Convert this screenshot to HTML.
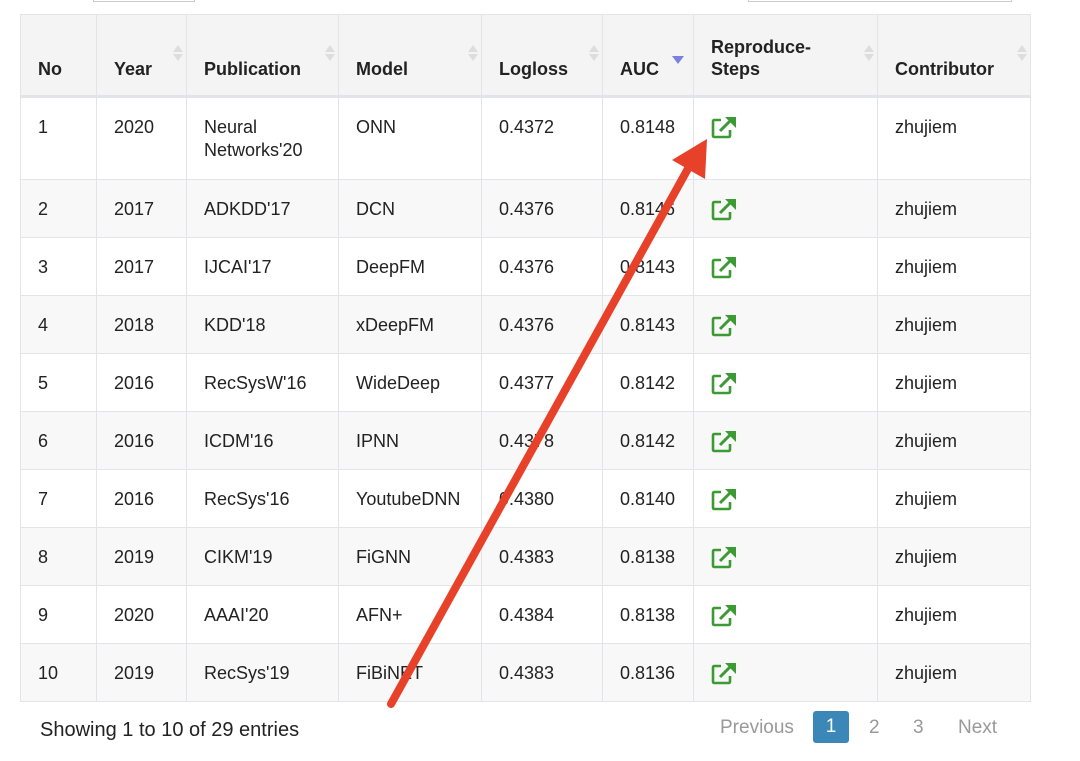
<!DOCTYPE html>
<html><head><style>
body{margin:0;width:1080px;height:761px;background:#fff;font-family:"Liberation Sans",Arial,sans-serif;color:#222;position:relative;overflow:hidden}
table{position:absolute;left:20px;top:14px;border-collapse:collapse;font-size:18px}
td,th{border:1px solid #e2e4e8;text-align:left;vertical-align:top;padding:0 0 0 17px;position:relative}
th{background:#f4f4f5;vertical-align:bottom;padding-bottom:15px;height:65px;font-weight:bold;line-height:22px;border-bottom:3px solid #e2e4e8}
td{height:58px;padding-top:18px;box-sizing:border-box;line-height:23px}
tr.r1 td{height:83px}
tbody tr:nth-child(even) td{background:#f8f8f8}
.s{position:absolute;right:8px;top:30px;width:0;height:0}
.s:before{content:"";position:absolute;left:-5px;top:0;border:5px solid transparent;border-bottom:7px solid #ddd;border-top:0}
.s:after{content:"";position:absolute;left:-5px;top:9px;border:5px solid transparent;border-top:7px solid #ddd;border-bottom:0}
.d{position:absolute;right:9px;top:41px;border:6px solid transparent;border-top:8px solid #7b7fe0;border-bottom:0}
svg.i{display:block;margin-top:-1px}
</style></head><body>
<div style="position:absolute;left:93px;top:-2px;width:100px;height:3px;border:1px solid #ccc;border-top:0"></div>
<div style="position:absolute;left:748px;top:-2px;width:262px;height:3px;border:1px solid #ccc;border-top:0"></div>
<table>
<colgroup><col style="width:76px"><col style="width:90px"><col style="width:152px"><col style="width:143px"><col style="width:121px"><col style="width:91px"><col style="width:184px"><col style="width:153px"></colgroup>
<thead><tr><th>No</th><th>Year<span class="s"></span></th><th>Publication<span class="s"></span></th><th>Model<span class="s"></span></th><th>Logloss<span class="s"></span></th><th>AUC<span class="d"></span></th><th>Reproduce-<br>Steps<span class="s"></span></th><th>Contributor<span class="s"></span></th></tr></thead>
<tbody>
<tr class="r1"><td>1</td><td>2020</td><td>Neural<br>Networks'20</td><td>ONN</td><td>0.4372</td><td>0.8148</td><td>ICON</td><td>zhujiem</td></tr>
<tr><td>2</td><td>2017</td><td>ADKDD'17</td><td>DCN</td><td>0.4376</td><td>0.8146</td><td>ICON</td><td>zhujiem</td></tr>
<tr><td>3</td><td>2017</td><td>IJCAI'17</td><td>DeepFM</td><td>0.4376</td><td>0.8143</td><td>ICON</td><td>zhujiem</td></tr>
<tr><td>4</td><td>2018</td><td>KDD'18</td><td>xDeepFM</td><td>0.4376</td><td>0.8143</td><td>ICON</td><td>zhujiem</td></tr>
<tr><td>5</td><td>2016</td><td>RecSysW'16</td><td>WideDeep</td><td>0.4377</td><td>0.8142</td><td>ICON</td><td>zhujiem</td></tr>
<tr><td>6</td><td>2016</td><td>ICDM'16</td><td>IPNN</td><td>0.4378</td><td>0.8142</td><td>ICON</td><td>zhujiem</td></tr>
<tr><td>7</td><td>2016</td><td>RecSys'16</td><td>YoutubeDNN</td><td>0.4380</td><td>0.8140</td><td>ICON</td><td>zhujiem</td></tr>
<tr><td>8</td><td>2019</td><td>CIKM'19</td><td>FiGNN</td><td>0.4383</td><td>0.8138</td><td>ICON</td><td>zhujiem</td></tr>
<tr><td>9</td><td>2020</td><td>AAAI'20</td><td>AFN+</td><td>0.4384</td><td>0.8138</td><td>ICON</td><td>zhujiem</td></tr>
<tr><td>10</td><td>2019</td><td>RecSys'19</td><td>FiBiNET</td><td>0.4383</td><td>0.8136</td><td>ICON</td><td>zhujiem</td></tr>
</tbody></table>
<div style="position:absolute;left:40px;top:719px;font-size:20px">Showing 1 to 10 of 29 entries</div>
<div style="position:absolute;left:720px;top:717px;font-size:19px;color:#999">Previous</div>
<div style="position:absolute;left:813px;top:711px;width:36px;height:32px;background:#3a87b8;border-radius:3px;color:#fff;font-size:19px;text-align:center;line-height:32px">1</div>
<div style="position:absolute;left:869px;top:717px;font-size:19px;color:#999">2</div>
<div style="position:absolute;left:913px;top:717px;font-size:19px;color:#999">3</div>
<div style="position:absolute;left:958px;top:717px;font-size:19px;color:#999">Next</div>
<svg style="position:absolute;left:0;top:0" width="1080" height="761">
<line x1="391" y1="704" x2="690" y2="165" stroke="#e8412a" stroke-width="8" stroke-linecap="round"/>
<polygon points="707,139 672,160 705,179" fill="#e8412a"/>
</svg>
<script>
var ic='<svg class="i" width="26" height="24" viewBox="0 0 26 24"><path d="M10 5H3.5Q2 5 2 6.5V20.5Q2 22 3.5 22H17.5Q19 22 19 20.5V15" fill="none" stroke="#3c9a33" stroke-width="2.6"/><path d="M9 16L20 5" stroke="#3c9a33" stroke-width="3"/><polygon points="14,2 25,2 25,13" fill="#3c9a33"/></svg>';
document.querySelectorAll('td').forEach(function(t){if(t.textContent=='ICON')t.innerHTML=ic;});
</script>
</body></html>
